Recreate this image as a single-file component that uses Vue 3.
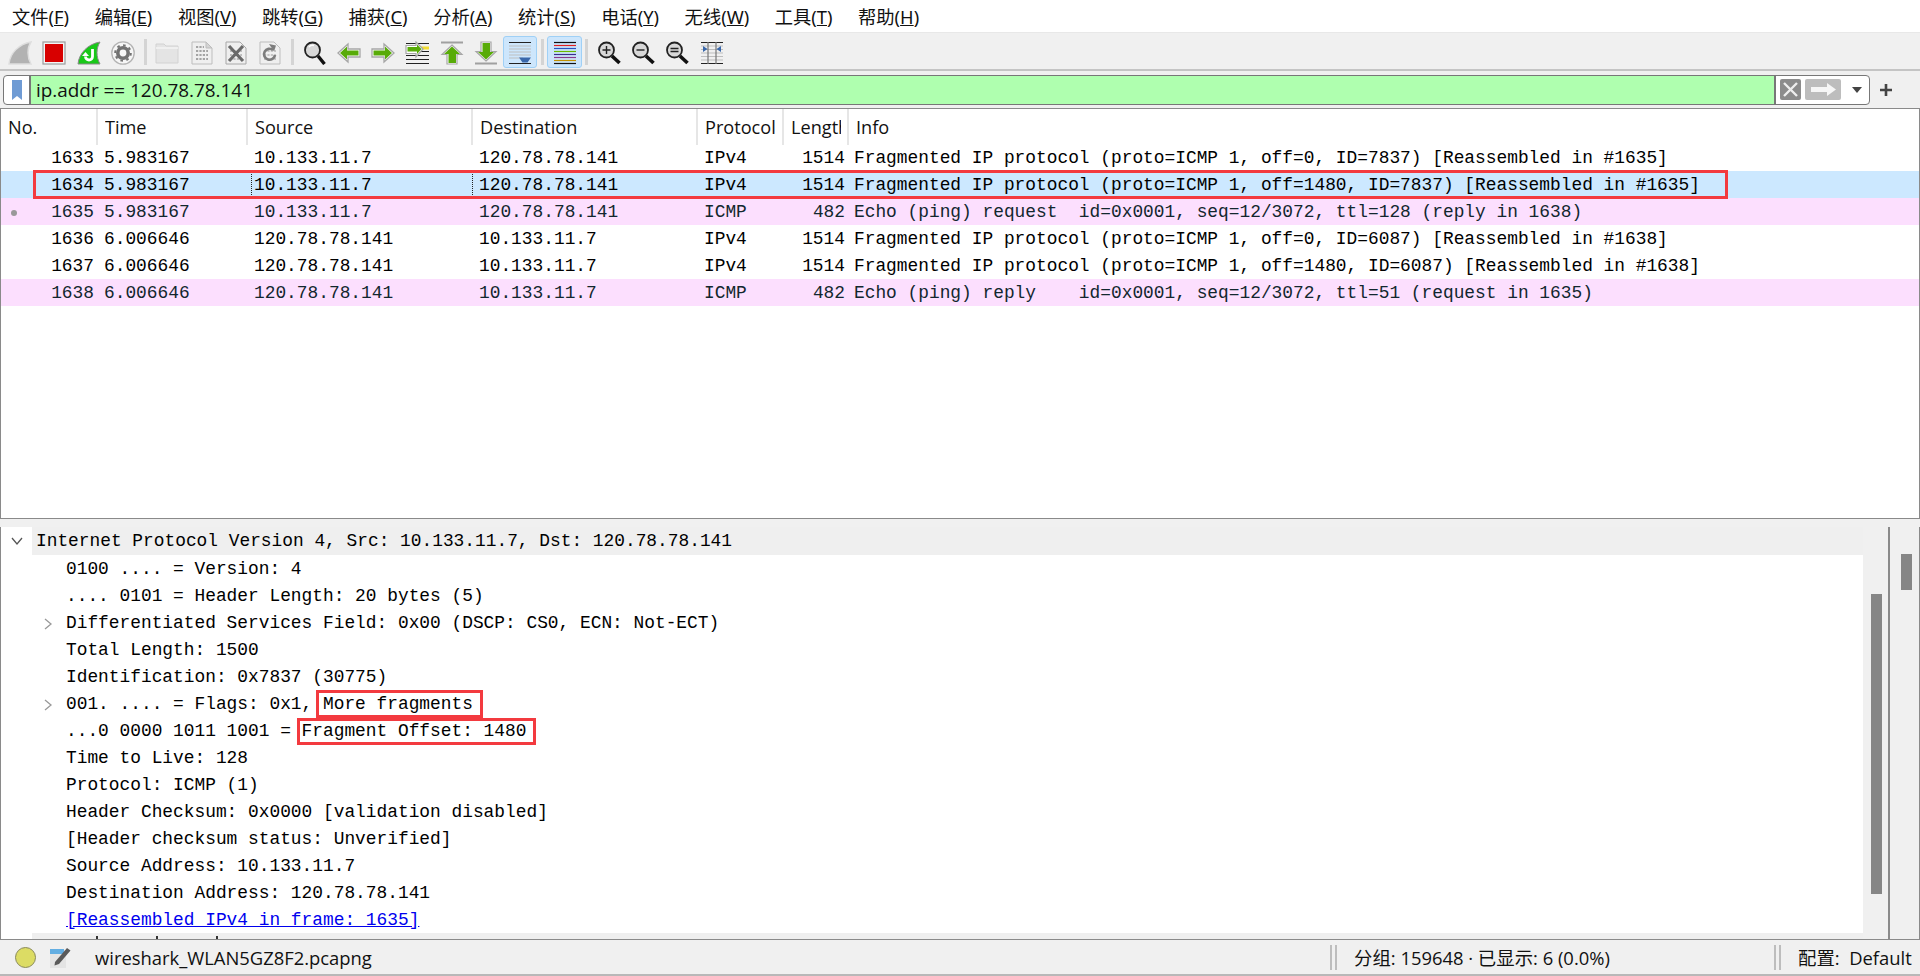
<template>
  <div class="app">
    <nav class="menubar">
      <span v-for="m in menus" :key="m.label" class="menu-item">{{ m.label }}(<u>{{ m.key }}</u>)</span>
    </nav>

    <div class="toolbar">
      <button class="tool">
        <svg viewBox="0 0 24 24"><path d="M1 23C2 12 11 3 23 1c-4 6-4 15 0 22z" fill="#b2b2b2" stroke="#dedede" stroke-width="1.400"/></svg>
      </button>
      <button class="tool">
        <svg viewBox="0 0 24 24"><rect x="1" y="1" width="22" height="22" fill="#f4f4f4" stroke="#9c9c9c" stroke-width="1.200"/><rect x="3" y="3" width="18" height="18" fill="#d80000"/></svg>
      </button>
      <button class="tool">
        <svg viewBox="0 0 24 24"><path d="M1 23C2 12 11 3 23 1c-4 6-4 15 0 22z" fill="#18c818" stroke="#8a8a8a" stroke-width="1"/><path d="M15.500 8v7.500a3.500 3.500 0 0 1-7 0" fill="none" stroke="#fff" stroke-width="2.800"/><path d="M5 15l3.500-4 3.500 4z" fill="#fff"/></svg>
      </button>
      <button class="tool">
        <svg viewBox="0 0 24 24"><circle cx="12" cy="12" r="11.200" fill="#f6f6f6" stroke="#b4b4b4" stroke-width="1.300"/><circle cx="12" cy="12" r="5.200" fill="none" stroke="#727272" stroke-width="3.600"/><circle cx="12" cy="12" r="7.800" fill="none" stroke="#727272" stroke-width="2" stroke-dasharray="2.600 3.500"/></svg>
      </button>
      <i class="tool-sep"></i>
      <button class="tool">
        <svg viewBox="0 0 24 24"><path d="M1 3h8l2 2h12v17H1z" fill="#e4e4e4" stroke="#d2d2d2"/><path d="M1 7h22" stroke="#f4f4f4" stroke-width="1.500"/></svg>
      </button>
      <button class="tool">
        <svg viewBox="0 0 24 24"><path d="M2 1h14l6 6v16H2z" fill="#efefef" stroke="#bdbdbd"/><path d="M16 1v6h6z" fill="#d4d4d4" stroke="#bdbdbd"/><path d="M6 6h8M6 10h12M6 14h12M6 18h12" stroke="#a4a4a4" stroke-width="2" stroke-dasharray="2.200 1.200"/></svg>
      </button>
      <button class="tool">
        <svg viewBox="0 0 24 24"><path d="M2 1h14l6 6v16H2z" fill="#efefef" stroke="#a8a8a8"/><path d="M6 10h12M6 14h12M6 18h12" stroke="#bdbdbd" stroke-width="2" stroke-dasharray="2.200 1.200"/><path d="M5 5l14 15M19 5L5 20" stroke="#6a6a6a" stroke-width="3.200"/></svg>
      </button>
      <button class="tool">
        <svg viewBox="0 0 24 24"><path d="M2 1h14l6 6v16H2z" fill="#efefef" stroke="#bdbdbd"/><path d="M6 10h12M6 14h12M6 18h12" stroke="#c4c4c4" stroke-width="2" stroke-dasharray="2.200 1.200"/><path d="M17 14a5.500 5.500 0 1 1-2-5" fill="none" stroke="#7c7c7c" stroke-width="2.600"/><path d="M11 3l7 1.500-2 6z" fill="#7c7c7c"/></svg>
      </button>
      <i class="tool-sep"></i>
      <button class="tool">
        <svg viewBox="0 0 24 24"><circle cx="9.500" cy="9" r="7.500" fill="#d8d8d8" stroke="#222" stroke-width="1.800"/><path d="M6 6a5 5 0 0 1 5-1.500" fill="none" stroke="#fff" stroke-width="1.500"/><path d="M15 15l6.500 8" stroke="#111" stroke-width="3.400"/></svg>
      </button>
      <button class="tool">
        <svg viewBox="0 0 24 24"><path d="M1 12l10-9v5h12v8H11v5z" fill="#fff" stroke="#a6a6a6" stroke-width="1.300"/><path d="M3 12l7-6.500V9.500h11.500v5H10v4z" fill="#58ab08"/></svg>
      </button>
      <button class="tool">
        <svg viewBox="0 0 24 24"><path d="M23 12L13 3v5H1v8h12v5z" fill="#fff" stroke="#a6a6a6" stroke-width="1.300"/><path d="M21 12l-7-6.500V9.500H2.500v5H14v4z" fill="#58ab08"/></svg>
      </button>
      <button class="tool">
        <svg viewBox="0 0 24 24"><path d="M14 7h10" stroke="#f2dc30" stroke-width="3"/><path d="M1 2.500h23M14 10.500h10M1 14.500h23M1 18.500h23M1 22.500h23" stroke="#222" stroke-width="1.200"/><path d="M18 8l-7-7v3.500H1v8h10V16z" fill="#fff" stroke="#a6a6a6" stroke-width="1.200"/><path d="M16.500 8L12 3.500V6H2.500v4.500H12V13z" fill="#58ab08"/></svg>
      </button>
      <button class="tool">
        <svg viewBox="0 0 24 24"><path d="M1 1.500h22" stroke="#a0a0a0" stroke-width="2"/><path d="M12 4l10 9.500h-5V23H7v-9.500H2z" fill="#fff" stroke="#a6a6a6" stroke-width="1.200"/><path d="M12 5.500l8 7.500h-4v9H8.500v-9H4z" fill="#58ab08"/></svg>
      </button>
      <button class="tool">
        <svg viewBox="0 0 24 24"><path d="M1 22.500h22" stroke="#a0a0a0" stroke-width="2"/><path d="M12 20l10-9.500h-5V1H7v9.500H2z" fill="#fff" stroke="#a6a6a6" stroke-width="1.200"/><path d="M12 18.500l8-7.500h-4V2H8.500v9H4z" fill="#58ab08"/></svg>
      </button>
      <button class="tool on">
        <svg viewBox="0 0 24 24"><path d="M1 1.500h22M1 22.500h22" stroke="#222" stroke-width="1.200"/><path d="M1 5h22M1 8h22M1 11h22M1 14h22M1 17h14" stroke="#bdbdbd" stroke-width="1.100"/><path d="M11 16.500h12l-3.500 5h-5z" fill="#3a68ab"/></svg>
      </button>
      <i class="tool-sep"></i>
      <button class="tool on">
        <svg viewBox="0 0 24 24"><path d="M1 1.500h22" stroke="#111" stroke-width="1.200"/><path d="M1 4.500h22" stroke="#e02020" stroke-width="1.200"/><path d="M1 7.500h22" stroke="#2a52be" stroke-width="1.200"/><path d="M1 10.500h22" stroke="#6ab800" stroke-width="1.200"/><path d="M1 13.500h22" stroke="#3a2e8e" stroke-width="1.200"/><path d="M1 16.500h22" stroke="#8a3a8a" stroke-width="1.200"/><path d="M1 19.500h22" stroke="#c09000" stroke-width="1.200"/><path d="M1 22.500h22" stroke="#111" stroke-width="1.200"/></svg>
      </button>
      <i class="tool-sep"></i>
      <button class="tool">
        <svg viewBox="0 0 24 24"><circle cx="9.500" cy="9" r="7.500" fill="#d8d8d8" stroke="#222" stroke-width="1.800"/><path d="M15 15l7.500 7" stroke="#111" stroke-width="3.600"/><path d="M5.500 9h8M9.500 5v8" stroke="#222" stroke-width="1.400"/></svg>
      </button>
      <button class="tool">
        <svg viewBox="0 0 24 24"><circle cx="9.500" cy="9" r="7.500" fill="#d8d8d8" stroke="#222" stroke-width="1.800"/><path d="M15 15l7.500 7" stroke="#111" stroke-width="3.600"/><path d="M5.500 9h8" stroke="#222" stroke-width="1.400"/></svg>
      </button>
      <button class="tool">
        <svg viewBox="0 0 24 24"><circle cx="9.500" cy="9" r="7.500" fill="#d8d8d8" stroke="#222" stroke-width="1.800"/><path d="M15 15l7.500 7" stroke="#111" stroke-width="3.600"/><path d="M5.500 7.500h8M5.500 10.500h8" stroke="#222" stroke-width="1.400"/></svg>
      </button>
      <button class="tool">
        <svg viewBox="0 0 24 24"><path d="M1 1.500h22M1 22.500h22" stroke="#222" stroke-width="1.200"/><path d="M1 5h22M1 8.500h22M1 12h22M1 15.500h22M1 19h22" stroke="#bdbdbd"/><path d="M8 1v22M16 1v22" stroke="#777" stroke-width="1.200"/><path d="M3 5l4.500 3L3 11zM21 5l-4.500 3 4.500 3z" fill="#3a68ab"/></svg>
      </button>
    </div>

    <div class="filterbar">
      <div class="filter">
        <span class="bookmark">
          <svg viewBox="0 0 12 20"><path d="M1 0h10v20l-5-4-5 4z" fill="#6f9bd4"/></svg>
        </span>
        <span class="filter-text">ip.addr == 120.78.78.141</span>
        <span class="clear">
          <svg viewBox="0 0 21 21"><rect width="21" height="21" rx="2" fill="#8c8c8c"/><path d="M4 4l13 13M17 4L4 17" stroke="#eee" stroke-width="2.400"/></svg>
        </span>
        <span class="apply">
          <svg viewBox="0 0 36 21"><rect width="36" height="21" rx="2" fill="#bdbdbd"/><path d="M6 8h16V4l9 6.500-9 6.500v-4H6z" fill="#f6f6f6"/></svg>
        </span>
        <span class="dropdown"></span>
      </div>
      <span class="add">
        <svg viewBox="0 0 12 12"><path d="M6 0v12M0 6h12" stroke="#444" stroke-width="2.600"/></svg>
      </span>
    </div>

    <section class="packets">
      <div class="row head">
        <span v-for="c in columns" :key="c" class="cell"><span class="clip">{{ c }}</span></span>
      </div>
      <div v-for="p in packets" :key="p.no" class="row" :class="p.kind">
        <i v-if="p.dot" class="dot"></i>
        <span class="cell num">{{ p.no }}</span>
        <span class="cell">{{ p.time }}</span>
        <span class="cell" :class="{ focus: p.kind === 'selected' }">{{ p.src }}</span>
        <span class="cell">{{ p.dst }}</span>
        <span class="cell">{{ p.proto }}</span>
        <span class="cell num">{{ p.len }}</span>
        <span class="cell info">{{ p.info }}</span>
      </div>
      <div class="row-box"></div>
    </section>

    <div class="pane-gap"></div>

    <section class="details">
      <div class="tree">
        <div class="line top">
          <svg class="chev" viewBox="0 0 12 12"><path d="M1 3l5 6 5-6" fill="none" stroke="#555" stroke-width="1.300"/></svg>
          <span>Internet Protocol Version 4, Src: 10.133.11.7, Dst: 120.78.78.141</span>
        </div>
        <div class="line sub">0100 .... = Version: 4</div>
        <div class="line sub">.... 0101 = Header Length: 20 bytes (5)</div>
        <div class="line sub">
          <svg class="chev closed" viewBox="0 0 12 12"><path d="M3 1l6 5-6 5" fill="none" stroke="#999" stroke-width="1.300"/></svg>
          <span>Differentiated Services Field: 0x00 (DSCP: CS0, ECN: Not-ECT)</span>
        </div>
        <div class="line sub">Total Length: 1500</div>
        <div class="line sub">Identification: 0x7837 (30775)</div>
        <div class="line sub">
          <svg class="chev closed" viewBox="0 0 12 12"><path d="M3 1l6 5-6 5" fill="none" stroke="#999" stroke-width="1.300"/></svg>
          <span>001. .... = Flags: 0x1, <b class="mark flags">More fragments</b></span>
        </div>
        <div class="line sub">...0 0000 1011 1001 = <b class="mark offset">Fragment Offset: 1480</b></div>
        <div class="line sub">Time to Live: 128</div>
        <div class="line sub">Protocol: ICMP (1)</div>
        <div class="line sub">Header Checksum: 0x0000 [validation disabled]</div>
        <div class="line sub">[Header checksum status: Unverified]</div>
        <div class="line sub">Source Address: 10.133.11.7</div>
        <div class="line sub">Destination Address: 120.78.78.141</div>
        <div class="line sub link">[Reassembled IPv4 in frame: 1635]</div>
        <div class="cut"><i class="tick"></i><i class="tick"></i><i class="tick"></i></div>
      </div>
      <div class="vscroll"><i class="thumb"></i></div>
      <div class="rail"><i class="rail-thumb"></i></div>
    </section>

    <footer class="status">
      <i class="led"></i>
      <svg class="note" viewBox="0 0 21 21"><rect x="0" y="3" width="16" height="18" fill="#e4e4e4"/><rect x="0" y="2" width="14" height="5" fill="#63aee2"/><path d="M5 15L17 1l3.500 2.500L9 17l-4.500 1.500z" fill="#5a5a5a"/></svg>
      <span class="file">wireshark_WLAN5GZ8F2.pcapng</span>
      <i class="grip"></i>
      <span class="counts">分组: 159648 · 已显示: 6 (0.0%)</span>
      <i class="grip"></i>
      <span class="profile">配置:&nbsp; Default</span>
    </footer>
  </div>
</template>

<script setup>
const menus = [
  { label: '文件', key: 'F' },
  { label: '编辑', key: 'E' },
  { label: '视图', key: 'V' },
  { label: '跳转', key: 'G' },
  { label: '捕获', key: 'C' },
  { label: '分析', key: 'A' },
  { label: '统计', key: 'S' },
  { label: '电话', key: 'Y' },
  { label: '无线', key: 'W' },
  { label: '工具', key: 'T' },
  { label: '帮助', key: 'H' }
]

const columns = ['No.', 'Time', 'Source', 'Destination', 'Protocol', 'Length', 'Info']

const packets = [
  { no: 1633, time: '5.983167', src: '10.133.11.7', dst: '120.78.78.141', proto: 'IPv4', len: 1514, info: 'Fragmented IP protocol (proto=ICMP 1, off=0, ID=7837) [Reassembled in #1635]' },
  { no: 1634, time: '5.983167', src: '10.133.11.7', dst: '120.78.78.141', proto: 'IPv4', len: 1514, kind: 'selected', info: 'Fragmented IP protocol (proto=ICMP 1, off=1480, ID=7837) [Reassembled in #1635]' },
  { no: 1635, time: '5.983167', src: '10.133.11.7', dst: '120.78.78.141', proto: 'ICMP', len: 482, kind: 'icmp', dot: true, info: 'Echo (ping) request  id=0x0001, seq=12/3072, ttl=128 (reply in 1638)' },
  { no: 1636, time: '6.006646', src: '120.78.78.141', dst: '10.133.11.7', proto: 'IPv4', len: 1514, info: 'Fragmented IP protocol (proto=ICMP 1, off=0, ID=6087) [Reassembled in #1638]' },
  { no: 1637, time: '6.006646', src: '120.78.78.141', dst: '10.133.11.7', proto: 'IPv4', len: 1514, info: 'Fragmented IP protocol (proto=ICMP 1, off=1480, ID=6087) [Reassembled in #1638]' },
  { no: 1638, time: '6.006646', src: '120.78.78.141', dst: '10.133.11.7', proto: 'ICMP', len: 482, kind: 'icmp', info: 'Echo (ping) reply    id=0x0001, seq=12/3072, ttl=51 (request in 1635)' }
]
</script>

<style>
html, body {
  margin: 0;
  height: 100%;
  overflow: hidden;
  background: #f0f0f0;
}
</style>

<style scoped>
.app {
  width: 1920px;
  height: 976px;
  display: flex;
  flex-direction: column;
  overflow: hidden;
  font-family: "Open Sans", "Noto Sans CJK SC", sans-serif;
  color: #111;
}

.menubar {
  height: 32px;
  flex: none;
  display: flex;
  align-items: center;
  background: #fff;
  font-family: "Noto Sans", "Noto Sans CJK SC", sans-serif;
  font-size: 18.300px;
  border-bottom: 1px solid #e8e8e8;
}
.menu-item {
  padding: 0 12.800px;
  white-space: nowrap;
}
.menu-item:first-child {
  padding-left: 12px;
}

.toolbar {
  height: 38px;
  flex: none;
  box-sizing: border-box;
  display: flex;
  align-items: center;
  padding: 2px 0 0 3px;
  background: #f0f0f0;
  border-bottom: 2px solid #c4c4c4;
}
.tool {
  width: 34.300px;
  height: 32px;
  flex: none;
  padding: 0;
  border: 1px solid transparent;
  background: none;
  display: flex;
  align-items: center;
  justify-content: center;
}
.tool svg {
  width: 24px;
  height: 24px;
  margin-top: 1px;
}
.tool.on {
  background: #cde6fc;
  border-color: #9fd0f6;
  border-radius: 3px;
}
.tool-sep {
  width: 3px;
  height: 26px;
  margin: 0 3.500px;
  flex: none;
  background: #d4d4d4;
}

.filterbar {
  height: 37px;
  flex: none;
  display: flex;
  align-items: center;
  padding-left: 3px;
  background: #f0f0f0;
}
.filter {
  width: 1867px;
  height: 30px;
  box-sizing: border-box;
  display: flex;
  align-items: stretch;
  background: #fff;
  border: 1.500px solid #777;
  border-radius: 4px;
}
.bookmark {
  width: 25px;
  display: flex;
  align-items: center;
  justify-content: center;
  border-right: 2px solid #777;
}
.bookmark svg {
  width: 12px;
  height: 20px;
}
.filter-text {
  width: 1745px;
  box-sizing: border-box;
  padding-left: 5px;
  line-height: 29px;
  font-size: 18.900px;
  background: #afffaf;
  border-right: 2px solid #777;
}
.clear {
  margin: 3px 0 0 4px;
}
.clear svg {
  display: block;
  width: 21px;
  height: 21px;
}
.apply {
  margin: 3px 0 0 4px;
}
.apply svg {
  display: block;
  width: 36px;
  height: 21px;
}
.dropdown {
  margin: 11px 0 0 11px;
  width: 0;
  height: 0;
  border: 5px solid transparent;
  border-top: 6px solid #444;
  border-bottom: 0;
}
.add {
  margin-left: 10px;
  display: flex;
}
.add svg {
  width: 12px;
  height: 12px;
}

.packets {
  position: relative;
  height: 411px;
  flex: none;
  box-sizing: border-box;
  background: #fff;
  border: 1px solid #8a8a8a;
  font-family: "Liberation Mono", monospace;
  font-size: 17.850px;
  overflow: hidden;
}
.row {
  position: relative;
  display: grid;
  grid-template-columns: 97px 150px 225px 225px 86px 65px 1fr;
  height: 27px;
  line-height: 28px;
  color: #000;
  white-space: pre;
}
.row.selected {
  background: #cce8ff;
}
.row.icmp {
  background: #fcdffe;
  color: #12272e;
}
.cell {
  padding-left: 6px;
}
.cell.info {
  padding-left: 5px;
}
.cell.num {
  padding: 0 4px 0 0;
  text-align: right;
}
.cell.focus {
  outline: 1px dotted #222;
  outline-offset: -1px;
  margin-left: 3px;
  padding-left: 3px;
}
.row.head {
  height: 35px;
  line-height: 36px;
  font-family: "Open Sans", sans-serif;
  font-size: 18.150px;
  color: #111;
}
.head .cell {
  padding: 0 6px 0 7px;
  border-right: 2px solid #e6e6e6;
  min-width: 0;
  background: #fff;
}
.head .cell:last-child {
  border-right: 0;
}
.clip {
  display: block;
  overflow: hidden;
}
.dot {
  position: absolute;
  left: 10px;
  top: 12px;
  width: 6px;
  height: 6px;
  border-radius: 50%;
  background: #999;
}
.row-box {
  position: absolute;
  left: 32px;
  top: 61px;
  width: 1695px;
  height: 29px;
  box-sizing: border-box;
  border: 3px solid #f33a3f;
  pointer-events: none;
}

.pane-gap {
  height: 8px;
  flex: none;
  background: #f0f0f0;
}

.details {
  flex: 1;
  min-height: 0;
  display: flex;
  background: #fff;
  border-left: 1px solid #8a8a8a;
  border-right: 1px solid #8a8a8a;
  font-family: "Liberation Mono", monospace;
  font-size: 17.850px;
}
.tree {
  flex: 1;
  min-width: 0;
  overflow: hidden;
}
.line {
  position: relative;
  height: 27px;
  line-height: 28px;
  padding-left: 65px;
  color: #000;
  white-space: pre;
}
.line.top {
  margin-left: 31px;
  padding-left: 4px;
  background: #efefef;
  height: 28px;
}
.line.link {
  color: #0000ee;
  text-decoration: underline;
}
.cut {
  height: 6px;
  margin-left: 31px;
  background: #efefef;
  display: flex;
  align-items: flex-end;
  padding-left: 64px;
  gap: 58px;
}
.tick {
  width: 2px;
  height: 3px;
  background: #333;
}
.chev {
  position: absolute;
  width: 12px;
  height: 12px;
  left: -21px;
  top: 8px;
}
.chev.closed {
  left: 41px;
  top: 9px;
}
.mark {
  font-weight: normal;
  display: inline-block;
  height: 22px;
  line-height: 22px;
  outline: 3px solid #f33a3f;
}
.mark.flags {
  padding: 0 7px 0 4px;
  margin: 0 -7px 0 -4px;
}
.mark.offset {
  height: 21px;
  line-height: 21px;
  padding: 0 7px 0 2px;
  margin: 0 -7px 0 -2px;
}
.vscroll {
  width: 25px;
  flex: none;
  position: relative;
  background: #f0f0f0;
  border-right: 2px solid #8a8a8a;
}
.thumb {
  position: absolute;
  left: 8px;
  top: 67px;
  width: 11px;
  height: 300px;
  background: #868686;
}
.rail {
  width: 29px;
  flex: none;
  position: relative;
  background: #f0f0f0;
}
.rail-thumb {
  position: absolute;
  left: 11px;
  top: 27px;
  width: 11px;
  height: 36px;
  background: #868686;
}

.status {
  height: 37px;
  flex: none;
  display: flex;
  align-items: center;
  box-sizing: border-box;
  background: #f0f0f0;
  border-top: 1.500px solid #8a8a8a;
  border-bottom: 2px solid #b8b8b8;
  font-size: 18.400px;
  font-family: "Open Sans", "Noto Sans CJK SC", sans-serif;
}
.led {
  width: 19px;
  height: 19px;
  margin-left: 15px;
  border-radius: 50%;
  background: #dcdc64;
  border: 1px solid #8a8a5a;
  flex: none;
}
.note {
  width: 21px;
  height: 21px;
  margin-left: 14px;
  flex: none;
}
.file {
  margin-left: 24px;
  width: 1235px;
  flex: none;
}
.grip {
  width: 7px;
  height: 25px;
  flex: none;
  box-sizing: border-box;
  border-left: 2px solid #bdbdbd;
  border-right: 2px solid #bdbdbd;
}
.counts {
  margin-left: 17px;
  width: 420px;
  flex: none;
}
.profile {
  margin-left: 17px;
  white-space: nowrap;
}
</style>
